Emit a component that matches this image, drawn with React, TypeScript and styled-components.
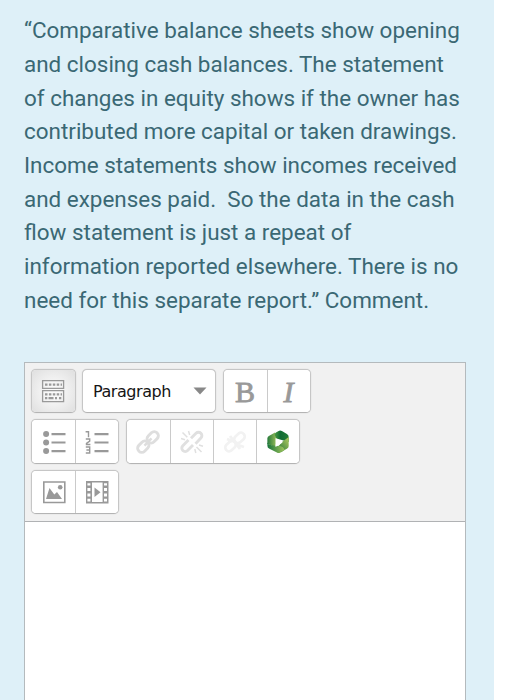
import React from 'react';
import styled, { createGlobalStyle, css } from 'styled-components';

const GlobalStyle = createGlobalStyle`
  * { box-sizing: border-box; }
  html, body { margin: 0; background: #fff; }
  body { height: 700px; overflow: hidden; }
`;

const Panel = styled.main`
  width: 494px;
  height: 700px;
  padding: 14.4px 28px 0 24px;
  overflow: hidden;
  background: #def0f8;
`;

const Question = styled.p`
  margin: 0 0 44.8px;
  height: 302.8px;
  font-family: Roboto, sans-serif;
  font-size: 22.45px;
  line-height: 33.65px;
  color: #3a6874;
`;

const Line = styled.span<{ $width: number }>`
  display: block;
  width: ${(p) => p.$width}px;
  white-space: pre;
`;

const Editor = styled.section`
  width: 442px;
  height: 360px;
  border: 1.5px solid #b4babd;
  background: #fff;
`;

const Toolbar = styled.div`
  display: flex;
  flex-direction: column;
  gap: 6px;
  height: 159px;
  padding: 6px;
  background: #f1f1f1;
  border-bottom: 1px solid #b0b2b4;
`;

const ToolRow = styled.div`
  display: flex;
  gap: 6.5px;
`;

const frame = css`
  height: 44.5px;
  border: 1px solid #c6c6c6;
  border-bottom-color: #b4b4b4;
  border-radius: 5px;
  background: #fff;
  box-shadow: 0 0 1px #bbb;
`;

const Group = styled.div`
  ${frame}
  display: flex;
  overflow: hidden;
`;

const Tool = styled.button<{ $active?: boolean }>`
  display: flex;
  align-items: center;
  justify-content: center;
  width: ${(p) => (p.$active ? 42.5 : 43)}px;
  height: 43px;
  padding: 0;
  border: 0;
  background: ${(p) => (p.$active ? 'radial-gradient(circle, #fafafa 15%, #e0e0e0 95%)' : '#fff')};
  & + & { border-left: 1px solid #cacaca; }
  svg { display: block; flex: none; }
`;

const FormatSelect = styled.button`
  ${frame}
  display: flex;
  align-items: center;
  justify-content: space-between;
  width: 134px;
  padding: 0 8px 0 10px;
  font-family: 'DejaVu Sans', sans-serif;
  font-size: 16px;
  letter-spacing: -0.45px;
  color: #151515;
`;

const Letter = styled.span<{ $italic?: boolean }>`
  font-family: 'Liberation Serif', serif;
  font-size: 30px;
  line-height: 43px;
  font-weight: 400;
  font-style: ${(p) => (p.$italic ? 'italic' : 'normal')};
  color: #999;
  -webkit-text-stroke: 0.8px #999;
`;

const lines: [string, number][] = [
  ['“Comparative balance sheets show opening', 436],
  ['and closing cash balances. The statement', 420],
  ['of changes in equity shows if the owner has', 436],
  ['contributed more capital or taken drawings.', 433],
  ['Income statements show incomes received', 433],
  ['and expenses paid.  So the data in the cash', 430],
  ['flow statement is just a repeat of', 327],
  ['information reported elsewhere. There is no', 435],
  ['need for this separate report.” Comment.', 405],
];

const Icon = ({ children }: { children: React.ReactNode }) => (
  <svg width="24" height="24" viewBox="0 0 24 24" fill="none">{children}</svg>
);

const ToggleIcon = () => (
  <Icon>
    <g stroke="#999" strokeWidth="1.3">
      <path d="M1.6 1.6h21v7.8h-21zM1.6 11.6h21v11h-21z" />
      <path strokeWidth="2.2" strokeDasharray="2.5 1.4" d="M4 5.6h17M4 15.3h17" />
      <path strokeWidth="2.2" d="M4 19.2h2.3M7.5 19.2h5M14 19.2h2M18 19.2h2.3" />
    </g>
  </Icon>
);

const BulletsIcon = () => (
  <Icon>
    <g fill="#999">
      <circle cx="4.1" cy="4" r="3" /><circle cx="4.1" cy="12.5" r="3" /><circle cx="4.1" cy="21" r="3" />
      <path d="M9.5 3h14v2.2h-14zM9.5 11.4h14v2.2h-14zM9.5 20h14v2.2h-14z" />
    </g>
  </Icon>
);

const NumbersIcon = () => (
  <Icon>
    <path fill="#999" d="M9.5 3h14v2.2h-14zM9.5 11.4h14v2.2h-14zM9.5 20h14v2.2h-14z" />
    <path stroke="#999" strokeWidth="1.4" d="M.6 1.8h2.9v5.5M.8 9h3.9v2.1L1.5 13.3v1.2h3.9M.8 17h3.9v6H.8M1.4 20h3.3" />
  </Icon>
);

const links = (
  <g fill="none" strokeWidth="2.9">
    <rect x="-12.9" y="-4.1" width="12.5" height="8.2" rx="4" />
    <rect x="0.4" y="-4.1" width="12.5" height="8.2" rx="4" />
  </g>
);

const LinkIcon = () => (
  <Icon>
    <g stroke="#dedede" transform="translate(12 12) rotate(-45)">
      {links}
      <path strokeWidth="2.5" d="M-5 0h10" />
    </g>
  </Icon>
);

const UnlinkIcon = () => (
  <Icon>
    <g stroke="#e0e0e0">
      <path strokeWidth="2.9" d="M8.5 10 2.8 15.7a3.4 3.4 0 0 0 0 4.8 3.4 3.4 0 0 0 4.8 0L13 15M11 8.3l5-5a3.4 3.4 0 0 1 4.9 0 3.4 3.4 0 0 1 0 4.8l-5.4 5.6" />
      <path strokeWidth="1.5" d="m2.5 2.5 4.8 4.8M8.5 1l1.2 4M1 8.5l4 1.2M16.5 17l5 5M14.8 19l1 4M19 15l4 1.2" />
    </g>
  </Icon>
);

const NoAutoLinkIcon = () => (
  <Icon>
    <g stroke="#f2f2f2">
      <g transform="translate(12 12) rotate(-43) scale(.92)">{links}</g>
      <path strokeWidth="2.8" d="m7 6 10 13M4 9l5 2M15 15l6 2" />
    </g>
  </Icon>
);

const PlayIcon = () => (
  <Icon>
    <defs>
      <linearGradient id="top" x1="0" x2="1"><stop stopColor="#4d9c43" /><stop offset=".4" stopColor="#116c34" /><stop offset="1" stopColor="#237d37" /></linearGradient>
      <linearGradient id="right" x1="0" y1="1" x2="1" y2="0"><stop stopColor="#176f35" /><stop offset="1" stopColor="#b8ce62" /></linearGradient>
      <linearGradient id="left" x1="0" x2="1"><stop stopColor="#267a3a" /><stop offset="1" stopColor="#9fc15c" /></linearGradient>
      <linearGradient id="bottom" x1="0" x2="1"><stop stopColor="#17733a" /><stop offset="1" stopColor="#a2c65d" /></linearGradient>
    </defs>
    <path fill="url(#left)" d="M1.4 8.5q0-1.7 1.5-2.6L9 2.5l2 8-2 6.5-7.6-3z" />
    <path fill="url(#top)" d="M8.6 5q0-1.6 1.4-2.4l2.6-1.7q1.6-.8 3.3.1l5 3q1.8 1.1 1.8 3.3V12L10.500 8.500z" />
    <path fill="url(#right)" d="M22.700 7v9q0 1.700-1.500 2.600L15 22.300 11 18l5-6z" />
    <path fill="url(#bottom)" d="M1.400 12.500q.800 2.500 4 2.800l8.800.700q3.200.500 4.500 3.700l-4.200 2.800q-1.800 1-3.600 0L3 18.500q-1.600-.900-1.600-2.800z" />
    <path fill="#fff" d="m9.500 8 7.200 4.500-7.200 4.500z" />
  </Icon>
);

const ImageIcon = () => (
  <Icon>
    <path stroke="#999" strokeWidth="1.6" d="M1.8 2h21v20.5h-21z" />
    <path fill="#999" d="m4 19 3.500-11 4.800 6.500 2.700-2.500 5 7z" />
    <circle cx="18.2" cy="7.3" r="2.300" fill="#999" />
  </Icon>
);

const VideoIcon = () => (
  <Icon>
    <path fill="#999" fillRule="evenodd" d="M1 1h22.5v22.5H1zM7 2.5v19.5h10.6V2.500zM2.400 3.300v2.300h3V3.300zM2.400 8v3h3V8zM2.400 13.400v3h3v-3zM2.400 18.800v2.600h3v-2.600zM19 3.300v2.300h3V3.300zM19 8v3h3V8zM19 13.400v3h3v-3zM19 18.800v2.600h3v-2.600z" />
    <path fill="#999" d="m9.500 7.500 6 4.800-6 4.800z" />
  </Icon>
);

export default function App() {
  return (
    <>
      <GlobalStyle />
      <Panel>
        <Question>
          {lines.map(([text, width]) => <Line key={text} $width={width}>{text}</Line>)}
        </Question>
        <Editor>
          <Toolbar>
            <ToolRow>
              <Group><Tool $active aria-label="Toggle toolbar"><ToggleIcon /></Tool></Group>
              <FormatSelect>
                Paragraph
                <svg width="14" height="8" viewBox="0 0 14 8"><path d="M.5.5h13L7 7.5z" fill="#888" /></svg>
              </FormatSelect>
              <Group>
                <Tool aria-label="Bold"><Letter>B</Letter></Tool>
                <Tool aria-label="Italic"><Letter $italic>I</Letter></Tool>
              </Group>
            </ToolRow>
            <ToolRow>
              <Group>
                <Tool aria-label="Bulleted list"><BulletsIcon /></Tool>
                <Tool aria-label="Numbered list"><NumbersIcon /></Tool>
              </Group>
              <Group>
                <Tool aria-label="Link"><LinkIcon /></Tool>
                <Tool aria-label="Unlink"><UnlinkIcon /></Tool>
                <Tool aria-label="Prevent automatic links"><NoAutoLinkIcon /></Tool>
                <Tool aria-label="Insert video"><PlayIcon /></Tool>
              </Group>
            </ToolRow>
            <ToolRow>
              <Group>
                <Tool aria-label="Image"><ImageIcon /></Tool>
                <Tool aria-label="Media"><VideoIcon /></Tool>
              </Group>
            </ToolRow>
          </Toolbar>
        </Editor>
      </Panel>
    </>
  );
}
